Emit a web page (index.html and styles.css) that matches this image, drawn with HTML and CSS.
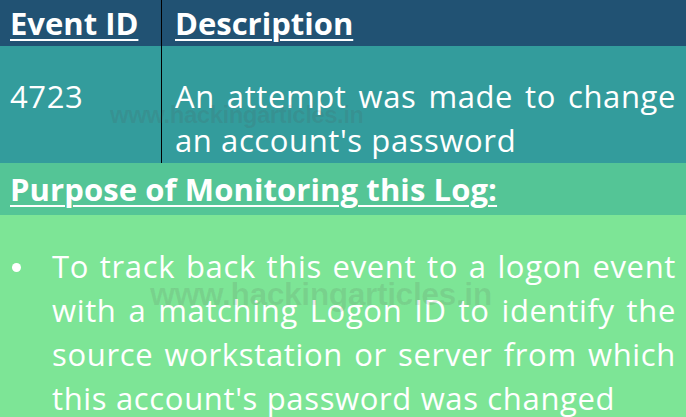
FILE: index.html
```html
<!DOCTYPE html>
<html>
<head>
<meta charset="utf-8">
<link rel="stylesheet" href="styles.css">
</head>
<body>
<div class="page">
  <div class="grid">
    <div class="cell head first"><span class="u">Event ID</span></div>
    <div class="cell head second"><span class="u">Description</span></div>
    <div class="cell body first id">4723</div>
    <div class="cell body desc">
      <div class="line full">An attempt was made to change</div>
      <div class="line">an account's password</div>
    </div>
  </div>
  <div class="purpose"><span class="u">Purpose of Monitoring this Log:</span></div>
  <ul class="list">
    <li>To track back this event to a logon event with a matching Logon ID to identify the source workstation or server from which this account's password was changed</li>
  </ul>
  <div class="wm wm1">www.hackingarticles.in</div>
  <div class="wm wm2">www.hackingarticles.in</div>
</div>
</body>
</html>
```
FILE: styles.css
```css
html, body {
  margin: 0;
  padding: 0;
}
body {
  width: 686px;
  height: 417px;
  overflow: hidden;
  font-family: "Open Sans", "Liberation Sans", sans-serif;
  color: #fff;
}
.page {
  position: relative;
  width: 686px;
  height: 417px;
  display: flex;
  flex-direction: column;
  background: #7de596;
}
.grid {
  display: grid;
  grid-template-columns: 162px 1fr;
  grid-template-rows: 46px 117px;
}
.cell {
  box-sizing: border-box;
}
.first {
  border-right: 1px solid #000;
}
.head {
  background: #215273;
  font-weight: 700;
  font-size: 31px;
  line-height: 46px;
  padding-left: 10px;
}
.head.second {
  padding-left: 13px;
}
.u {
  text-decoration: underline;
  text-decoration-thickness: 2px;
  text-underline-offset: 4px;
}
.body {
  background: #339c9c;
  font-size: 31px;
  line-height: 44px;
  letter-spacing: 0.6px;
  padding-top: 28px;
}
.id {
  padding-left: 10px;
}
.desc {
  padding-left: 13px;
  padding-right: 10px;
}
.line.full {
  text-align: justify;
  text-align-last: justify;
}
.purpose {
  background: #54c596;
  height: 52px;
  font-weight: 700;
  font-size: 31px;
  line-height: 52px;
  padding-left: 10px;
  letter-spacing: 0.1px;
}
.list {
  margin: 0;
  padding: 29px 10px 0 52px;
  list-style: none;
  font-size: 31px;
  line-height: 44px;
  letter-spacing: 0.65px;
  text-align: justify;
}
.list li {
  position: relative;
}
.list li::before {
  content: "";
  position: absolute;
  left: -40px;
  top: 19px;
  width: 9px;
  height: 9px;
  border-radius: 50%;
  background: #fff;
}
.wm {
  position: absolute;
  font-family: "Liberation Sans", sans-serif;
  font-weight: 700;
  color: rgba(90, 70, 70, 0.12);
  white-space: nowrap;
  pointer-events: none;
  letter-spacing: -0.5px;
}
.wm1 {
  left: 110px;
  top: 101px;
  font-size: 24px;
}
.wm2 {
  left: 150px;
  top: 276px;
  font-size: 32px;
}
```
